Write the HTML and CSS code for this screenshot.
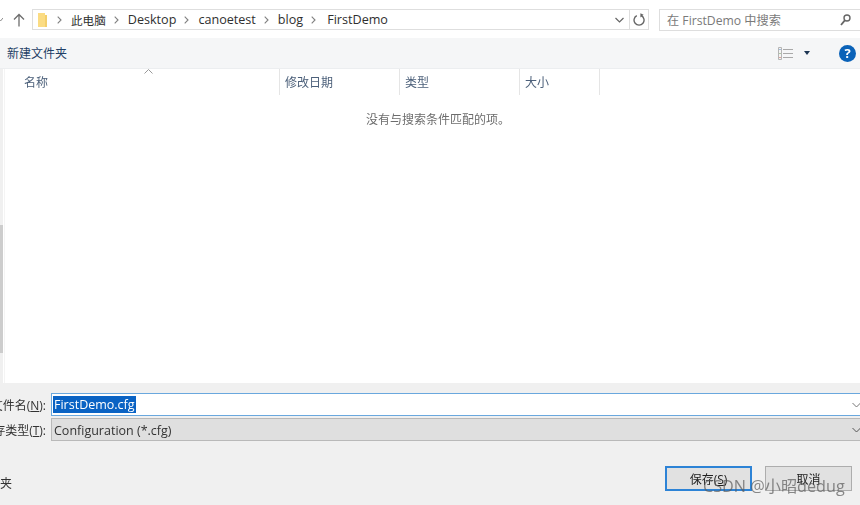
FILE: index.html
```html
<!DOCTYPE html>
<html lang="zh-CN">
<head>
  <meta charset="UTF-8" />
  <title>另存为</title>
  <link rel="stylesheet" href="styles.css">
</head>
<body>
  <div class="dialog">
    <div class="navbar">
      <svg class="nav-back" width="5" height="6" viewBox="0 0 5 6"><path d="M0 1l2.5 3L5 1" fill="none" stroke="#8a8a8a" stroke-width="1"/></svg>
      <svg class="nav-up" width="12" height="14" viewBox="0 0 12 14"><path d="M6 13.5V1.500M1 6.500l5-5 5 5" fill="none" stroke="#6d6d6d" stroke-width="1.300"/></svg>
      <div class="address">
        <svg class="folder" width="10" height="14" viewBox="0 0 10 14"><path d="M0 0h7v14H0z" fill="#fbdc83"/><path d="M7 2h2v12H7z" fill="#f3cf6c"/></svg>
        <svg class="crumb-sep crumb-first" width="5" height="8" viewBox="0 0 5 8"><path d="M.7.7L4 4 .7 7.300" fill="none" stroke="#808080" stroke-width="1.100"/></svg><span class="crumb crumb-cjk">此电脑</span>
        <svg class="crumb-sep" width="5" height="8" viewBox="0 0 5 8"><path d="M.7.7L4 4 .7 7.300" fill="none" stroke="#808080" stroke-width="1.100"/></svg><span class="crumb">Desktop</span>
        <svg class="crumb-sep" width="5" height="8" viewBox="0 0 5 8"><path d="M.7.7L4 4 .7 7.300" fill="none" stroke="#808080" stroke-width="1.100"/></svg><span class="crumb">canoetest</span>
        <svg class="crumb-sep" width="5" height="8" viewBox="0 0 5 8"><path d="M.7.7L4 4 .7 7.300" fill="none" stroke="#808080" stroke-width="1.100"/></svg><span class="crumb">blog</span>
        <svg class="crumb-sep" width="5" height="8" viewBox="0 0 5 8"><path d="M.7.7L4 4 .7 7.300" fill="none" stroke="#808080" stroke-width="1.100"/></svg><span class="crumb crumb-last">FirstDemo</span>
        <svg class="address-drop" width="9" height="6" viewBox="0 0 9 6"><path d="M.5 1l4 4 4-4" fill="none" stroke="#666" stroke-width="1.200"/></svg>
        <div class="refresh">
          <svg width="12" height="13" viewBox="0 0 12 13"><path d="M3.800 2.700A5 5 0 1 0 8.300 2.700" fill="none" stroke="#666" stroke-width="1.400"/><path d="M7.400.2v4.400l3.200-2.900z" fill="#666"/></svg>
        </div>
      </div>
      <div class="search">
        <span>在 FirstDemo 中搜索</span>
        <svg width="11" height="12" viewBox="0 0 11 12"><circle cx="7" cy="4" r="3" fill="none" stroke="#666" stroke-width="1.400"/><path d="M5 6.200L1 11" stroke="#666" stroke-width="1.800"/></svg>
      </div>
    </div>

    <div class="toolbar">
      <span class="new-folder">新建文件夹</span>
      <svg class="view-icon" width="15" height="13" viewBox="0 0 15 13">
        <path d="M.5.5h3v12h-3z" fill="#f4f4f4" stroke="#b5b5b5"/>
        <path d="M1.500 2h1v1h-1z" fill="#4a86c5"/><path d="M1.500 6h1v1h-1z" fill="#6a9a50"/><path d="M1.500 10h1v1h-1z" fill="#c8503c"/>
        <path d="M5 2.500h10M5 6.500h10M5 10.500h10" stroke="#a9a9a9" stroke-width="1"/>
      </svg>
      <span class="view-caret"></span>
      <span class="help">?</span>
    </div>

    <div class="middle">
      <div class="scroll-track"><div class="scroll-thumb"></div></div>
      <div class="list">
        <div class="list-head">
          <div class="col col-name">名称<svg class="sort" width="9" height="5" viewBox="0 0 9 5"><path d="M.5 4.500l4-4 4 4" fill="none" stroke="#999" stroke-width="1"/></svg></div>
          <div class="col col-date">修改日期</div>
          <div class="col col-type">类型</div>
          <div class="col col-size">大小</div>
        </div>
        <p class="empty">没有与搜索条件匹配的项。</p>
      </div>
    </div>

    <div class="form">
      <div class="field">
        <label class="field-label">文件名(<u>N</u>):</label>
        <div class="input input-name"><span class="selected">FirstDemo.cfg</span><svg width="9" height="6" viewBox="0 0 9 6"><path d="M.5 1l4 4 4-4" fill="none" stroke="#777" stroke-width="1"/></svg></div>
      </div>
      <div class="field">
        <label class="field-label">保存类型(<u>T</u>):</label>
        <div class="input input-type"><span>Configuration (*.cfg)</span><svg width="9" height="6" viewBox="0 0 9 6"><path d="M.5 1l4 4 4-4" fill="none" stroke="#555" stroke-width="1"/></svg></div>
      </div>
    </div>

    <div class="footer">
      <span class="hide-folders">隐藏文件夹</span>
      <button class="btn btn-primary">保存(<u>S</u>)</button>
      <button class="btn">取消</button>
    </div>

    <div class="watermark">CSDN @小昭dedug</div>
  </div>
</body>
</html>
```

FILE: styles.css
```css
* {
  box-sizing: border-box;
}

body {
  margin: 0;
  background: #f0f0f0;
  font-family: "Open Sans", "Noto Sans CJK SC", sans-serif;
  font-size: 12px;
  color: #333;
}

.dialog {
  position: relative;
  width: 860px;
  height: 505px;
  overflow: hidden;
  display: flex;
  flex-direction: column;
  filter: blur(0.4px); /* the shot is a soft upscale */
}

/* top row */
.navbar {
  height: 38px;
  background: #fff;
  display: flex;
  align-items: flex-start;
  padding-top: 9px;
}

.nav-back {
  margin: 8px 0 0 -2px;
}

.nav-up {
  margin: 4px 0 0 10px;
}

.address {
  margin-left: 7px;
  width: 617px;
  height: 21px;
  border: 1px solid #dedede;
  display: flex;
  align-items: center;
  padding-left: 5px;
  font-size: 12.600px;
  color: #2f2f2f;
}

.folder {
  flex: none;
}

.crumb-sep {
  flex: none;
  margin: 0 9px 0 8px;
}

.crumb-first {
  margin: 0 9px 0 9px;
}

.crumb {
  white-space: nowrap;
}

.crumb-cjk {
  font-size: 11.600px;
}

.crumb-last {
  margin-left: 2px;
}

.address-drop {
  margin-left: auto;
  margin-right: 5px;
}

.refresh {
  width: 19px;
  height: 19px;
  border-left: 1px solid #dedede;
  display: flex;
  align-items: center;
  justify-content: center;
}

.search {
  margin-left: 10px;
  flex: 1;
  height: 22px;
  border: 1px solid #dedede;
  border-right: none;
  display: flex;
  align-items: center;
  justify-content: space-between;
  padding: 0 9px 0 7px;
  color: #7a7a7a;
  font-size: 12.200px;
}

/* command bar */
.toolbar {
  height: 31px;
  background: #f5f6f7;
  display: flex;
  align-items: center;
  border-bottom: 1px solid #eceef0;
  padding: 0 4px 0 7px;
}

.new-folder {
  color: #1f3f66;
}

.view-icon {
  margin-left: auto;
}

.view-caret {
  margin-left: 11px;
  border-top: 4px solid #1c3553;
  border-left: 3.500px solid transparent;
  border-right: 3.500px solid transparent;
}

.help {
  margin-left: 29px;
  width: 17px;
  height: 17px;
  border-radius: 50%;
  background: #0a62b8;
  color: #fff;
  font-size: 13px;
  font-weight: 700;
  text-align: center;
  line-height: 17px;
}

/* list */
.middle {
  flex: 1;
  display: flex;
  background: #fff;
}

.scroll-track {
  width: 3px;
  background: #f0f0f0;
  padding-top: 156px;
}

.scroll-thumb {
  height: 128px;
  background: #cdcdcd;
}

.list {
  flex: 1;
  margin-left: 1px;
  border-left: 1px solid #f4f4f4;
}

.list-head {
  display: flex;
  height: 26px;
}

.col {
  position: relative;
  padding: 4px 0 0 5px;
  color: #4c607a;
  border-right: 1px solid #e5e5e5;
}

.col-name {
  width: 275px;
  padding-left: 19px;
}

.col-date,
.col-type {
  width: 120px;
}

.col-size {
  width: 80px;
}

.sort {
  position: absolute;
  left: 139px;
  top: 0;
}

.empty {
  margin: 15px 0 0 361px;
  color: #6d6d6d;
}

/* filename rows */
.form {
  padding-top: 10px;
  height: 60px;
}

.field {
  display: flex;
  height: 25px;
}

.field-label {
  width: 46px;
  margin-right: 5px;
  display: flex;
  justify-content: flex-end;
  white-space: nowrap;
  line-height: 26px;
  flex: none;
}

.input {
  flex: 1;
  height: 23px;
  display: flex;
  align-items: center;
  justify-content: space-between;
  font-size: 12.500px;
  padding: 0 0 0 2px;
  margin-right: -1px;
}

.input-name {
  background: #fff;
  border: 1px solid #6aa8de;
  border-right: none;
}

.selected {
  background: #0a63c4;
  color: #fff;
  line-height: 17px;
  padding: 0 1px;
  margin-left: -1px;
}

.input-type {
  background: #dfdfdf;
  border: 1px solid #b9b9b9;
  border-right: none;
  padding-top: 1px;
}

/* bottom row */
.footer {
  flex: none;
  height: 62px;
  display: flex;
  align-items: flex-start;
  padding: 23px 8px 0 0;
}

.hide-folders {
  margin-left: -48px;
  margin-right: auto;
  margin-top: 8px;
  white-space: nowrap;
}

.btn {
  width: 87px;
  height: 25px;
  margin-left: 13px;
  background: #e1e1e1;
  border: 1px solid #adadad;
  font: inherit;
  color: #222;
  padding: 0;
}

.btn-primary {
  border: 2px solid #2d83d6;
}

.watermark {
  position: absolute;
  left: 703px;
  top: 473px;
  font-size: 16.200px;
  color: rgba(90, 90, 90, 0.7);
  white-space: nowrap;
}
```
